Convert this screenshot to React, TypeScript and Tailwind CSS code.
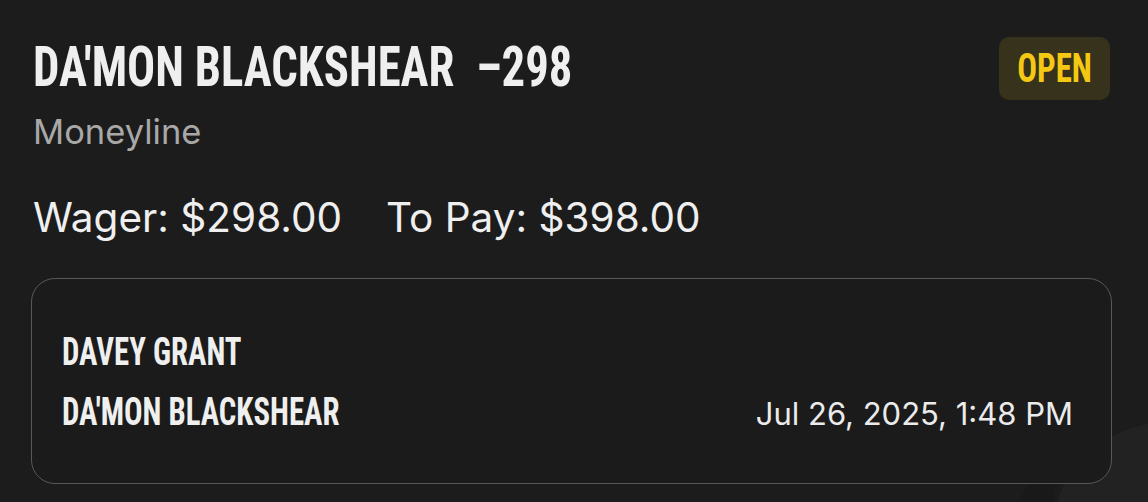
export default function App() {
  const cond = { fontFamily: '"Roboto Condensed", "Liberation Sans Narrow", Roboto, "Liberation Sans", sans-serif' };
  return (
    <div className="relative w-[1148px] h-[502px] overflow-hidden bg-[#1c1c1c] text-[#efefef]" style={{ fontFamily: 'Inter, "Noto Sans", sans-serif' }}>
      {/* faint watermark in the corner */}
      <svg className="absolute right-0 bottom-0" width="240" height="140" viewBox="0 0 240 140">
        <path d="M150 140 C160 95 200 70 240 62 L240 140 Z" fill="#222222" />
        <path d="M110 140 C120 120 140 105 160 100 C150 115 145 128 145 140 Z" fill="#191919" />
      </svg>

      <div className="relative flex flex-col px-[31px]">
        <div className="flex items-start justify-between pt-[40px] pl-[2px] pr-[7px]">
          <div className="flex flex-col">
            <div className="origin-left scale-x-[0.85] whitespace-pre text-[55px] font-bold leading-none" style={cond}>
              {"DA'MON BLACKSHEAR  \u2013298"}
            </div>
            <div className="mt-[20px] text-[34.5px] leading-none text-[#a8a8a8]">Moneyline</div>
          </div>
          <div className="mt-[-3px] flex h-[63px] w-[111px] items-center justify-center rounded-[10px] bg-[#37321c]">
            <span className="scale-x-[0.82] text-[40px] font-bold leading-none text-[#f5c814]" style={cond}>OPEN</span>
          </div>
        </div>

        <div className="mt-[48px] flex gap-[44px] pl-[2px] text-[40.5px] leading-none">
          <span>Wager: $298.00</span>
          <span>To Pay: $398.00</span>
        </div>

        <div className="mt-[40px] mr-[5px] flex flex-col gap-[22px] rounded-[24px] border border-[#585858] bg-[#1b1b1b] px-[30px] pt-[54px] pb-[52px]">
          <div className="origin-left scale-x-[0.81] text-[38px] font-bold leading-none" style={cond}>DAVEY GRANT</div>
          <div className="flex items-baseline justify-between">
            <span className="origin-left scale-x-[0.81] text-[38px] font-bold leading-none" style={cond}>DA'MON BLACKSHEAR</span>
            <span className="pr-[8px] text-[31px] leading-none text-[#ebebeb]">Jul 26, 2025, 1:48 PM</span>
          </div>
        </div>
      </div>
    </div>
  );
}
